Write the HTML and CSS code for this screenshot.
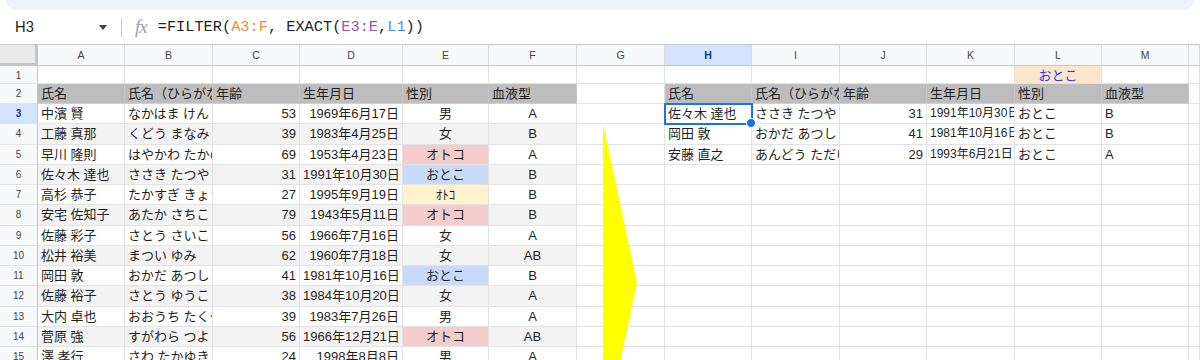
FILE: index.html
```html
<!DOCTYPE html>
<html lang="ja">
<head>
  <meta charset="UTF-8">
  <title>FILTER / EXACT</title>
  <link rel="stylesheet" href="styles.css">
</head>
<body>
  <div class="toolbar-edge"></div>
  <div class="formula-bar">
    <div class="name-box">
      <span>H3</span>
      <span class="caret"></span>
    </div>
    <div class="divider"></div>
    <span class="fx">fx</span>
    <div class="formula">=FILTER(<span class="ref-a">A3:F</span>, EXACT(<span class="ref-e">E3:E</span>,<span class="ref-l">L1</span>))</div>
  </div>

  <div class="sheet-wrap">
    <div class="sheet" id="sheet"></div>
    <svg class="arrow" width="40" height="330" viewBox="0 0 40 330">
      <polygon points="3,3 37,163 3,323" fill="#ffff00"/>
    </svg>
  </div>

  <script>
    const sheet = document.getElementById('sheet');
    const letters = ['A','B','C','D','E','F','G','H','I','J','K','L','M',''];
    const labels = ['氏名', '氏名（ひらがな）', '年齢', '生年月日', '性別', '血液型'];

    const people = [
      ['中濱 賢', 'なかはま けん', 53, '1969年6月17日', '男', 'A'],
      ['工藤 真那', 'くどう まなみ', 39, '1983年4月25日', '女', 'B'],
      ['早川 隆則', 'はやかわ たかのり', 69, '1953年4月23日', 'オトコ', 'A'],
      ['佐々木 達也', 'ささき たつや', 31, '1991年10月30日', 'おとこ', 'B'],
      ['高杉 恭子', 'たかすぎ きょうこ', 27, '1995年9月19日', 'ｵﾄｺ', 'B'],
      ['安宅 佐知子', 'あたか さちこ', 79, '1943年5月11日', 'オトコ', 'B'],
      ['佐藤 彩子', 'さとう さいこ', 56, '1966年7月16日', '女', 'A'],
      ['松井 裕美', 'まつい ゆみ', 62, '1960年7月18日', '女', 'AB'],
      ['岡田 敦', 'おかだ あつし', 41, '1981年10月16日', 'おとこ', 'B'],
      ['佐藤 裕子', 'さとう ゆうこ', 38, '1984年10月20日', '女', 'A'],
      ['大内 卓也', 'おおうち たくや', 39, '1983年7月26日', '男', 'A'],
      ['菅原 強', 'すがわら つよし', 56, '1966年12月21日', 'オトコ', 'AB'],
      ['澤 孝行', 'さわ たかゆき', 24, '1998年8月8日', '男', 'A'],
      ['安藤 直之', 'あんどう ただゆき', 29, '1993年6月21日', 'おとこ', 'A']
    ];

    const criteria = 'おとこ';
    const result = people.filter(p => p[4] === criteria);

    const leftAlign = ['', '', 'num', 'num', 'center', 'center'];
    const rightAlign = ['', '', 'num', 'num small', '', ''];
    const genderColor = { 'オトコ': 'pink', 'おとこ': 'blue', 'ｵﾄｺ': 'yellow' };

    const addCell = (text, cls) => {
      const div = document.createElement('div');
      div.className = 'cell ' + (cls || '');
      div.textContent = text;
      sheet.appendChild(div);
      return div;
    };

    // 列見出し
    addCell('', 'corner');
    letters.forEach(l => addCell(l, l === 'H' ? 'col-head active' : 'col-head'));

    // 1行目: 条件セル
    addCell('1', 'row-head');
    letters.forEach(l => addCell(l === 'L' ? criteria : '', l === 'L' ? 'criteria' : ''));

    // 2行目: 見出し
    addCell('2', 'row-head');
    labels.forEach(t => addCell(t, 'head'));
    addCell('');
    labels.forEach(t => addCell(t, 'head'));
    addCell('');

    people.forEach((p, i) => {
      const row = i + 3;
      addCell(row, row === 3 ? 'row-head active' : 'row-head');
      const band = row % 2 === 0 ? ' band' : '';
      p.forEach((v, c) => {
        let cls = leftAlign[c] + band;
        if (c === 4 && genderColor[v]) cls += ' ' + genderColor[v];
        addCell(v, cls);
      });
      addCell('');
      const r = result[i];
      for (let c = 0; c < 6; c++) {
        const cell = addCell(r ? r[c] : '', rightAlign[c]);
        if (row === 3 && c === 0) cell.classList.add('selected');
      }
      addCell('');
    });
  </script>
</body>
</html>
```

FILE: styles.css
```css
body {
  margin: 0;
  background: #fff;
  font-family: 'Liberation Sans', 'Noto Sans CJK JP', sans-serif;
  color: #1f1f1f;
  overflow: hidden;
}
.toolbar-edge {
  height: 10px;
  margin: 0 6px;
  background: #eef2f9;
  border-radius: 0 0 14px 14px;
}
.formula-bar {
  display: flex;
  align-items: center;
  height: 34px;
  border-bottom: 1px solid #c7c7c7;
}
.name-box {
  width: 92px;
  padding: 0 14px 0 15px;
  display: flex;
  justify-content: space-between;
  align-items: center;
  font-family: 'Roboto', 'Liberation Sans', sans-serif;
  font-size: 15px;
}
.caret {
  width: 0;
  height: 0;
  border-left: 4px solid transparent;
  border-right: 4px solid transparent;
  border-top: 5px solid #444;
}
.divider {
  width: 1px;
  height: 19px;
  background: #c7c7c7;
}
.fx {
  margin-left: 13px;
  font-family: 'Liberation Serif', serif;
  font-style: italic;
  font-size: 19px;
  color: #9aa0a6;
  letter-spacing: -1px;
}
.formula {
  margin-left: 11px;
  font-family: 'Liberation Mono', monospace;
  font-size: 15.3px;
  color: #1f1f1f;
}
.ref-a { color: #e69138; }
.ref-e { color: #9157c2; }
.ref-l { color: #4a8cf2; }

.sheet-wrap {
  position: relative;
}
.sheet {
  display: grid;
  grid-template-columns: 38px 87px 88px 87px 103px 86px 88px 88px 87px 88px 87px 88px 87px 87px 1fr;
  grid-template-rows: 21px 18px 20px repeat(14, 20.25px);
}
.cell {
  box-sizing: border-box;
  border-right: 1px solid #e2e2e2;
  border-bottom: 1px solid #e2e2e2;
  padding: 0 3px;
  font-size: 13px;
  line-height: 19px;
  white-space: nowrap;
  overflow: hidden;
}
.corner {
  background: #e9e9e9;
  border-right: 3px solid #c4c4c4;
  border-bottom: 3px solid #c4c4c4;
}
.col-head {
  background: #f8f9fa;
  border-right-color: #dadce0;
  border-bottom-color: #c4c7c5;
  text-align: center;
  font-size: 10.5px;
  line-height: 20px;
  color: #444;
}
.row-head {
  background: #f8f9fa;
  border-right-color: #c4c7c5;
  text-align: center;
  font-size: 10px;
  color: #444;
}
.active {
  background: #d3e3fd;
  color: #0b3a8c;
  font-weight: bold;
}
.head {
  background: #bdbdbd;
  border-right-color: #c6c6c6;
  border-bottom-color: #d0d0d0;
}
.band {
  background: #f3f3f3;
}
.num {
  text-align: right;
}
.small {
  font-size: 12px;
}
.center {
  text-align: center;
}
.pink { background: #f4cccc; }
.blue { background: #c9daf8; }
.yellow { background: #fff2cc; }
.criteria {
  background: #fce5cd;
  color: #2a3af0;
  text-align: center;
}
.selected {
  position: relative;
  overflow: visible;
  outline: 2px solid #1a73e8;
  outline-offset: -1px;
  z-index: 2;
}
.selected::after {
  content: '';
  position: absolute;
  right: -5px;
  bottom: -5px;
  width: 8px;
  height: 8px;
  border-radius: 50%;
  background: #1a73e8;
  border: 1px solid #fff;
}
.arrow {
  position: absolute;
  left: 600px;
  top: 75px;
  z-index: 3;
}
```
